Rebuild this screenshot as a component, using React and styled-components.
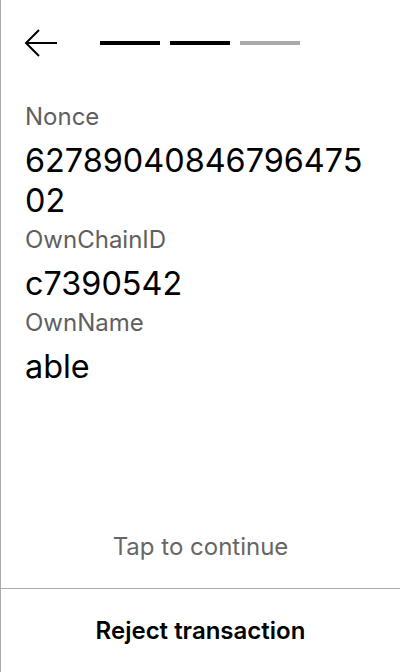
import React from "react";
import styled, { createGlobalStyle } from "styled-components";

const Global = createGlobalStyle`
  html, body { margin: 0; padding: 0; background: #fff; }
  body { font-family: Inter, "Noto Sans", Roboto, sans-serif; -webkit-font-smoothing: antialiased; }
  * { box-sizing: border-box; }
`;

const Screen = styled.div`
  width: 400px;
  height: 672px;
  display: flex;
  flex-direction: column;
  border-left: 1px solid #aaaaaa;
  background: #fff;
`;

const Header = styled.div`
  display: flex;
  align-items: center;
  height: 40px;
  margin-top: 23px;
  padding-left: 23px;
`;

const BackButton = styled.button`
  width: 34px;
  height: 34px;
  padding: 0;
  border: none;
  background: none;
  display: flex;
  align-items: center;
  justify-content: center;
  cursor: pointer;
`;

const Steps = styled.div`
  display: flex;
  gap: 10px;
  margin-left: 42px;
`;

const Step = styled.div`
  width: 60px;
  height: 4px;
  background: ${(p) => (p.$done ? "#000" : "#aaaaaa")};
`;

const Content = styled.div`
  flex: 1;
  display: flex;
  flex-direction: column;
  padding: 38px 24px 0 24px;
`;

const Field = styled.div`
  display: flex;
  flex-direction: column;
  gap: 8px;
  margin-bottom: 3px;
`;

const Label = styled.div`
  font-size: 24px;
  line-height: 32px;
  color: #5f5f5f;
`;

const Value = styled.div`
  font-size: 32.4px;
  line-height: 40px;
  color: #000;
  word-break: break-all;
`;

const Hint = styled.div`
  text-align: center;
  font-size: 24px;
  line-height: 32px;
  color: #666;
  padding-bottom: 25px;
`;

const Footer = styled.div`
  border-top: 1px solid #aaaaaa;
  height: 84px;
  display: flex;
  align-items: center;
  justify-content: center;
`;

const Reject = styled.button`
  border: none;
  background: none;
  font-family: inherit;
  font-size: 24px;
  font-weight: 600;
  color: #000;
  cursor: pointer;
`;

const fields = [
  { label: "Nonce", value: "6278904084679647502" },
  { label: "OwnChainID", value: "c7390542" },
  { label: "OwnName", value: "able" },
];

export default function App() {
  return (
    <>
      <Global />
      <Screen>
        <Header>
          <BackButton aria-label="Back">
            <svg width="34" height="34" viewBox="0 0 34 34" fill="none">
              <path d="M33 20H2M15 7L2 20L15 33" stroke="#000" strokeWidth="2" transform="translate(0,-3)" />
            </svg>
          </BackButton>
          <Steps>
            <Step $done />
            <Step $done />
            <Step />
          </Steps>
        </Header>
        <Content>
          {fields.map((f) => (
            <Field key={f.label}>
              <Label>{f.label}</Label>
              <Value>{f.value}</Value>
            </Field>
          ))}
        </Content>
        <Hint>Tap to continue</Hint>
        <Footer>
          <Reject>Reject transaction</Reject>
        </Footer>
      </Screen>
    </>
  );
}
